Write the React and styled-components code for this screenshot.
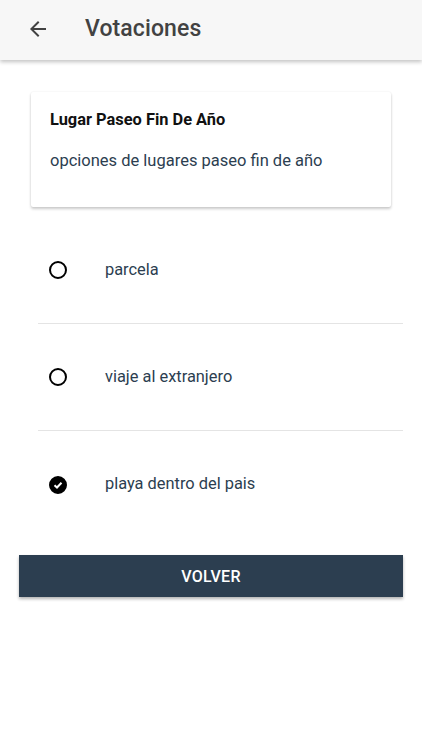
import React, { useState } from "react";
import styled, { createGlobalStyle } from "styled-components";

const GlobalStyle = createGlobalStyle`
  body {
    margin: 0;
    background: #fff;
    font-family: Roboto, "Noto Sans", sans-serif;
  }
`;

const Page = styled.div`
  min-height: 750px;
  background: #fff;
`;

const Header = styled.header`
  height: 60px;
  box-sizing: border-box;
  padding-bottom: 3px;
  display: flex;
  align-items: center;
  background: #f7f7f7;
  box-shadow: 0 2px 4px rgba(0, 0, 0, 0.24);
  position: relative;
  z-index: 1;
`;

const BackButton = styled.button`
  width: 24px;
  height: 24px;
  margin-left: 26px;
  padding: 0;
  border: none;
  background: none;
  display: flex;
  align-items: center;
  justify-content: center;
  color: #424242;
`;

const Title = styled.h1`
  margin: 0 0 0 35px;
  font-size: 23px;
  font-weight: 500;
  color: #424242;
  letter-spacing: 0.1px;
`;

const Content = styled.main`
  padding: 32px 19px 0;
`;

const Card = styled.section`
  margin: 0 12px;
  padding: 18px 19px 36px;
  background: #fff;
  border-radius: 2px;
  box-shadow: 0 2px 3px rgba(0, 0, 0, 0.2), 0 0 2px rgba(0, 0, 0, 0.08);
`;

const CardTitle = styled.h2`
  margin: 0;
  font-size: 16.4px;
  line-height: 20px;
  font-weight: 700;
  color: #111;
`;

const CardText = styled.p`
  margin: 21px 0 0;
  font-size: 16.5px;
  line-height: 20px;
  color: #2c3e50;
`;

const List = styled.div`
  margin-top: 10px;
  display: flex;
  flex-direction: column;
`;

const Option = styled.label`
  height: 107px;
  box-sizing: border-box;
  display: flex;
  align-items: center;
  margin-left: 19px;
  border-bottom: ${(p) => (p.$last ? "none" : "1px solid #e4e4e4")};
  cursor: pointer;
`;

const Radio = styled.span`
  width: 18px;
  height: 18px;
  margin-left: 11px;
  border-radius: 50%;
  box-sizing: border-box;
  border: 2px solid #000;
  background: ${(p) => (p.$checked ? "#000" : "transparent")};
  display: flex;
  align-items: center;
  justify-content: center;
  flex-shrink: 0;
`;

const OptionText = styled.span`
  margin-left: 38px;
  font-size: 16.4px;
  color: #2c3e50;
  position: relative;
  top: -1px;
`;

const VolverButton = styled.button`
  width: 100%;
  height: 42px;
  margin-top: 17px;
  border: none;
  border-radius: 0;
  background: #2c3e50;
  color: #fff;
  font-family: Roboto, "Noto Sans", sans-serif;
  font-size: 16px;
  font-weight: 500;
  letter-spacing: 0.3px;
  box-shadow: 0 2px 3px rgba(0, 0, 0, 0.3);
`;

const options = ["parcela", "viaje al extranjero", "playa dentro del pais"];

export default function App() {
  const [selected, setSelected] = useState(2);

  return (
    <Page>
      <GlobalStyle />
      <Header>
        <BackButton aria-label="Volver">
          <svg width="24" height="24" viewBox="0 0 24 24" fill="currentColor">
            <path d="M20 11H7.83l5.59-5.59L12 4l-8 8 8 8 1.41-1.41L7.83 13H20v-2z" />
          </svg>
        </BackButton>
        <Title>Votaciones</Title>
      </Header>
      <Content>
        <Card>
          <CardTitle>Lugar Paseo Fin De Año</CardTitle>
          <CardText>opciones de lugares paseo fin de año</CardText>
        </Card>
        <List>
          {options.map((opt, i) => (
            <Option
              key={opt}
              $last={i === options.length - 1}
              onClick={() => setSelected(i)}
            >
              <Radio $checked={selected === i}>
                {selected === i && (
                  <svg width="10" height="10" viewBox="0 0 10 10">
                    <path
                      d="M1.5 5.2 L4 7.5 L8.5 2.8"
                      fill="none"
                      stroke="#fff"
                      strokeWidth="2"
                    />
                  </svg>
                )}
              </Radio>
              <OptionText>{opt}</OptionText>
            </Option>
          ))}
        </List>
        <VolverButton>VOLVER</VolverButton>
      </Content>
    </Page>
  );
}
